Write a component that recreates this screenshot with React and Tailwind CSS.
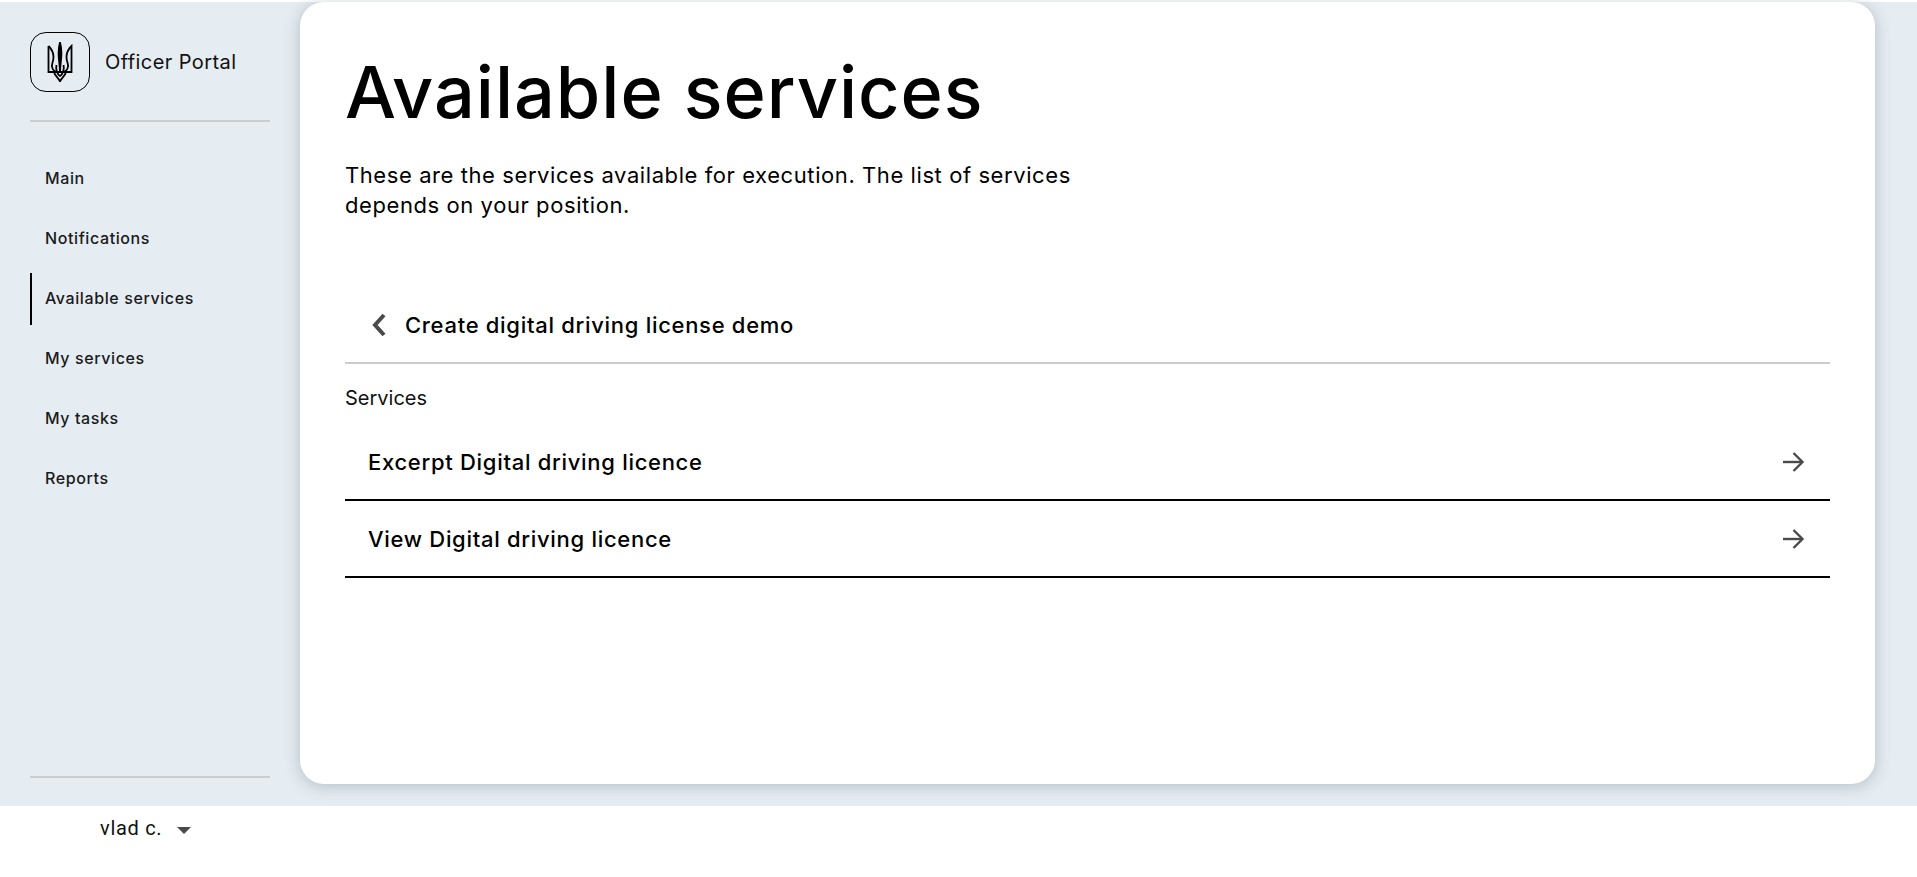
const navItems = ['Main', 'Notifications', 'Available services', 'My services', 'My tasks', 'Reports']
const services = ['Excerpt Digital driving licence', 'View Digital driving licence']

function Trident() {
  return (
    <svg width="26" height="40" viewBox="0 0 26 40" fill="none" stroke="#000" strokeWidth="1.8">
      <path d="M13 0.5 C11.6 5 11.4 11 11.8 16 C12.2 21 13 24 13 31 C13 24 13.8 21 14.2 16 C14.6 11 14.4 5 13 0.5 Z" fill="#000" />
      <path d="M1.5 4 V30 H24.5 V4 C22 6.5 19.5 9 19.5 15 C19.5 21 22.5 22 20.5 26.5 C19.5 29 17 30 14 30" />
      <path d="M1.5 4 C4 6.5 6.5 9 6.5 15 C6.5 21 3.5 22 5.5 26.5 C6.5 29 9 30 12 30" />
      <path d="M7 30 C8 34 11 35 13 39.5 C15 35 18 34 19 30" />
      <path d="M9.5 23 C8.5 27 10 32 13 34 C16 32 17.5 27 16.5 23" />
    </svg>
  )
}

function ArrowRight() {
  return (
    <svg width="24" height="24" viewBox="0 0 24 24" fill="none" stroke="#4a4a4a" strokeWidth="2.4">
      <path d="M2 12 H21" />
      <path d="M12.5 3 L21.5 12 L12.5 21" />
    </svg>
  )
}

export default function App() {
  return (
    <div className="h-[877px] overflow-hidden bg-white pt-[2px] text-black font-['Inter',sans-serif]">
      <div className="flex h-[804px] bg-[#e5ecf2]">
        {/* Sidebar */}
        <aside className="flex w-[300px] shrink-0 flex-col px-[30px] pb-[28px] pt-[30px]">
          <div className="flex h-[90px] items-start gap-[15px] border-b-2 border-[#cccccc]">
            <div className="flex h-[60px] w-[60px] items-center justify-center rounded-[16px] border border-black">
              <Trident />
            </div>
            <span className="mt-[20px] text-[20px] leading-[20px] tracking-[0.42px] text-[#111]">Officer Portal</span>
          </div>
          <nav className="mt-[31px] flex flex-1 flex-col gap-[7px]">
            {navItems.map(item => (
              <a
                key={item}
                className={`flex h-[52px] items-center pb-[2px] text-[16px] font-medium tracking-[0.6px] text-[#1a1a1a] mb-px ${item === 'Available services' ? 'border-l-2 border-black pl-[13px]' : 'pl-[15px]'}`}
              >
                {item}
              </a>
            ))}
          </nav>
          <div className="border-t-2 border-[#cccccc]" />
        </aside>

        {/* Main card */}
        <main className="mb-[22px] mr-[42px] flex-1 rounded-[24px] bg-white px-[45px] pt-[45px] shadow-[0_2px_16px_rgba(70,85,100,0.3)]">
          <h1 className="text-[72px] font-medium leading-[90px] tracking-[0.95px]">Available services</h1>
          <p className="mt-[23px] w-[740px] text-[22px] leading-[30px] tracking-[0.58px]">
            These are the services available for execution. The list of services depends on your position.
          </p>

          <div className="mt-[67px] flex h-[77px] items-center border-b-2 border-[#cccccc] pl-[26px]">
            <svg width="16" height="24" viewBox="0 0 16 24" fill="none" stroke="#4a4a4a" strokeWidth="4">
              <path d="M13 2 L4 12 L13 22" />
            </svg>
            <span className="ml-[18px] pt-[2px] text-[22px] font-medium tracking-[0.7px]">Create digital driving license demo</span>
          </div>

          <div className="mt-[21px] mb-[13px] text-[20px] leading-[26px] text-[#111]">Services</div>

          <div>
            {services.map(name => (
              <div key={name} className="flex h-[77px] items-center justify-between border-b-2 border-black pl-[23px] pr-[25px]">
                <span className="pt-[2px] text-[22px] font-medium tracking-[0.7px]">{name}</span>
                <ArrowRight />
              </div>
            ))}
          </div>
        </main>
      </div>

      {/* Footer */}
      <div className="flex h-[71px] items-start pl-[100px] pt-[10px] font-['Roboto',sans-serif]">
        <span className="text-[20px] leading-[24px] tracking-[0.7px] text-[#111]">vlad c.</span>
        <span className="ml-[15px] mt-[11px] h-0 w-0 border-x-[7px] border-t-[7px] border-x-transparent border-t-[#4a4a4a]" />
      </div>
    </div>
  )
}
